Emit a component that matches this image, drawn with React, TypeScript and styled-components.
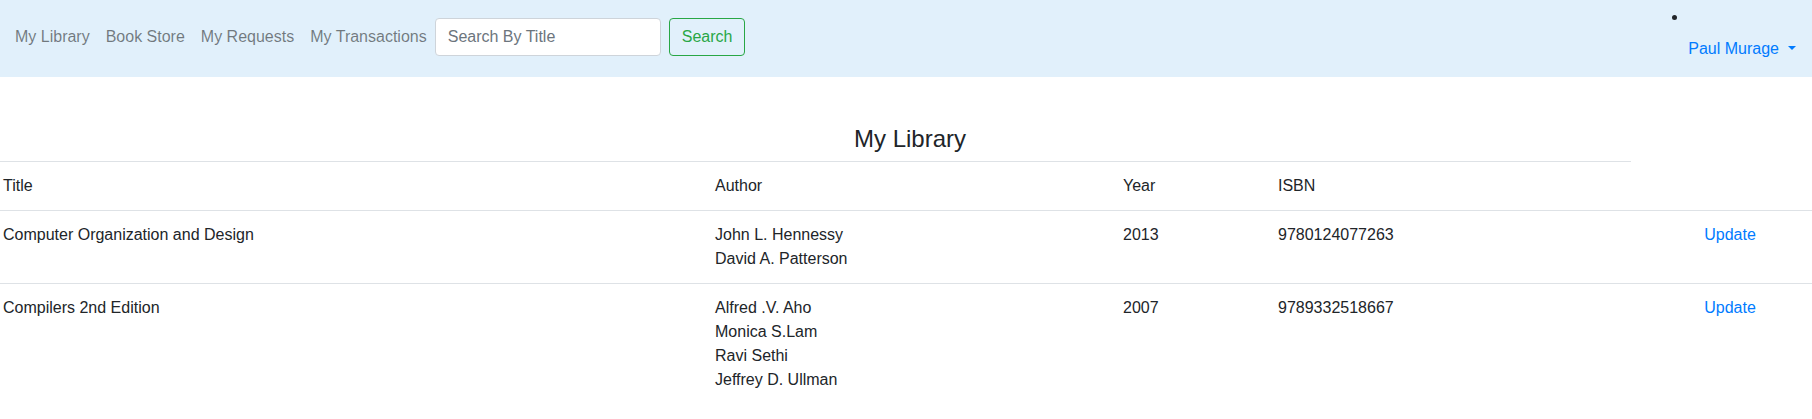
import React from "react";
import styled, { createGlobalStyle } from "styled-components";

const GlobalStyle = createGlobalStyle`
  html, body {
    margin: 0;
    padding: 0;
    background: #ffffff;
  }
  body {
    font-family: "Liberation Sans", Arial, sans-serif;
    font-size: 16px;
    line-height: 1.5;
    color: #212529;
  }
  * { box-sizing: border-box; }
`;

const Navbar = styled.nav`
  display: flex;
  align-items: center;
  justify-content: space-between;
  background: #e1f0fb;
  padding: 5px 16px 8px 7px;
`;

const NavLeft = styled.div`
  display: flex;
  align-items: center;
`;

const NavLink = styled.a`
  display: block;
  padding: 8px;
  line-height: 24px;
  color: rgba(0, 0, 0, 0.5);
  text-decoration: none;
  cursor: pointer;
`;

const SearchForm = styled.form`
  display: flex;
  align-items: center;
  gap: 8px;
  margin: 0;
`;

const SearchInput = styled.input`
  width: 226px;
  height: 38px;
  padding: 6px 12px;
  font-family: inherit;
  font-size: 16px;
  line-height: 24px;
  color: #495057;
  background: #ffffff;
  border: 1px solid #ced4da;
  border-radius: 4px;
  outline: none;
  &::placeholder {
    color: #6c757d;
  }
`;

const OutlineButton = styled.button`
  height: 38px;
  padding: 6px 12px;
  font-family: inherit;
  font-size: 16px;
  line-height: 24px;
  color: #28a745;
  background: transparent;
  border: 1px solid #28a745;
  border-radius: 4px;
  cursor: pointer;
`;

const UserMenu = styled.div`
  display: flex;
  flex-direction: column;
  align-items: flex-start;
`;

const BulletRow = styled.div`
  height: 24px;
  display: flex;
  align-items: center;
`;

const Dot = styled.span`
  width: 5px;
  height: 5px;
  border-radius: 50%;
  background: #212529;
`;

const DropdownLink = styled.a`
  display: block;
  margin-left: 16px;
  padding: 8px 0;
  line-height: 24px;
  color: #007bff;
  text-decoration: none;
  cursor: pointer;
`;

const Caret = styled.span`
  display: inline-block;
  margin-left: 9px;
  vertical-align: 0.255em;
  border-top: 0.3em solid #007bff;
  border-right: 0.3em solid transparent;
  border-left: 0.3em solid transparent;
`;

const Heading = styled.h4`
  margin: 48px 0 8px;
  padding-left: 8px;
  font-size: 24px;
  font-weight: 400;
  line-height: 28px;
  text-align: center;
  color: #212529;
`;

const Table = styled.table`
  width: 100%;
  border-collapse: collapse;
  table-layout: fixed;
`;

const HeadCell = styled.th`
  padding: 12px 4px 12px 3px;
  font-weight: 400;
  text-align: left;
  vertical-align: top;
  border-top: 1px solid #dee2e6;
`;

const Cell = styled.td<{ $action?: boolean }>`
  padding: ${(p) => (p.$action ? "12px 4px 12px 21px" : "12px 4px 12px 3px")};
  text-align: ${(p) => (p.$action ? "center" : "left")};
  vertical-align: top;
  border-top: 1px solid #dee2e6;
`;

const AuthorLine = styled.div`
  line-height: 24px;
`;

const ActionLink = styled.a`
  color: #007bff;
  text-decoration: none;
  cursor: pointer;
`;

const books = [
  {
    title: "Computer Organization and Design",
    authors: ["John L. Hennessy", "David A. Patterson"],
    year: "2013",
    isbn: "9780124077263",
  },
  {
    title: "Compilers 2nd Edition",
    authors: ["Alfred .V. Aho", "Monica S.Lam", "Ravi Sethi", "Jeffrey D. Ullman"],
    year: "2007",
    isbn: "9789332518667",
  },
];

export default function App() {
  return (
    <>
      <GlobalStyle />
      <Navbar>
        <NavLeft>
          <NavLink>My Library</NavLink>
          <NavLink>Book Store</NavLink>
          <NavLink>My Requests</NavLink>
          <NavLink>My Transactions</NavLink>
          <SearchForm onSubmit={(e) => e.preventDefault()}>
            <SearchInput placeholder="Search By Title" />
            <OutlineButton type="submit">Search</OutlineButton>
          </SearchForm>
        </NavLeft>
        <UserMenu>
          <BulletRow>
            <Dot />
          </BulletRow>
          <DropdownLink>
            Paul Murage
            <Caret />
          </DropdownLink>
        </UserMenu>
      </Navbar>
      <Heading>My Library</Heading>
      <Table>
        <colgroup>
          <col style={{ width: 712 }} />
          <col style={{ width: 408 }} />
          <col style={{ width: 155 }} />
          <col style={{ width: 356 }} />
          <col />
        </colgroup>
        <thead>
          <tr>
            <HeadCell>Title</HeadCell>
            <HeadCell>Author</HeadCell>
            <HeadCell>Year</HeadCell>
            <HeadCell>ISBN</HeadCell>
          </tr>
        </thead>
        <tbody>
          {books.map((b) => (
            <tr key={b.isbn}>
              <Cell>{b.title}</Cell>
              <Cell>
                {b.authors.map((a) => (
                  <AuthorLine key={a}>{a}</AuthorLine>
                ))}
              </Cell>
              <Cell>{b.year}</Cell>
              <Cell>{b.isbn}</Cell>
              <Cell $action>
                <ActionLink>Update</ActionLink>
              </Cell>
            </tr>
          ))}
        </tbody>
      </Table>
    </>
  );
}
